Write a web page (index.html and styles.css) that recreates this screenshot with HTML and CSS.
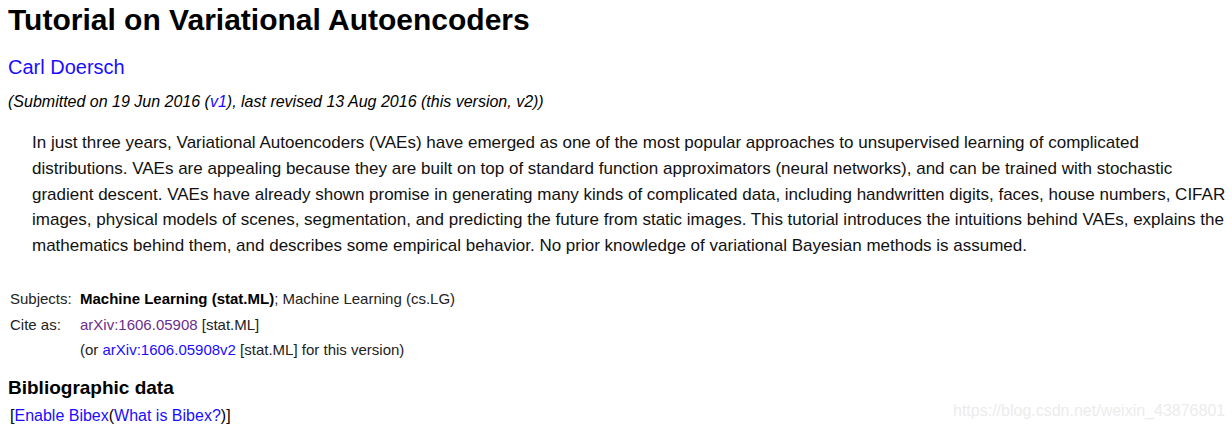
FILE: index.html
```html
<!DOCTYPE html>
<html lang="en">
<head>
    <meta charset="UTF-8">
    <title>Tutorial on Variational Autoencoders</title>
    <link rel="stylesheet" href="styles.css">
</head>
<body>
    <div class="leftcolumn">
        <h1 class="title">Tutorial on Variational Autoencoders</h1>
        <div class="authors"><a href="#">Carl Doersch</a></div>
        <div class="dateline">(Submitted on 19 Jun 2016 (<a href="#">v1</a>), last revised 13 Aug 2016 (this version, v2))</div>
        <blockquote class="abstract">In just three years, Variational Autoencoders (VAEs) have emerged as one of the most popular approaches to unsupervised learning of complicated distributions. VAEs are appealing because they are built on top of standard function approximators (neural networks), and can be trained with stochastic gradient descent. VAEs have already shown promise in generating many kinds of complicated data, including handwritten digits, faces, house numbers, CIFAR images, physical models of scenes, segmentation, and predicting the future from static images. This tutorial introduces the intuitions behind VAEs, explains the mathematics behind them, and describes some empirical behavior. No prior knowledge of variational Bayesian methods is assumed.</blockquote>

        <table class="metatable">
            <tr>
                <td class="label">Subjects:</td>
                <td><span class="primary-subject">Machine Learning (stat.ML)</span>; Machine Learning (cs.LG)</td>
            </tr>
            <tr>
                <td class="label">Cite as:</td>
                <td><a href="#" class="visited">arXiv:1606.05908</a> [stat.ML]</td>
            </tr>
            <tr>
                <td class="label"></td>
                <td>(or <a href="#">arXiv:1606.05908v2</a> [stat.ML] for this version)</td>
            </tr>
        </table>

        <h2 class="bib-title">Bibliographic data</h2>
        <div class="bibex">[<a href="#">Enable Bibex</a>(<a href="#">What is Bibex?</a>)]</div>
    </div>
    <div class="watermark">https://blog.csdn.net/weixin_43876801</div>
</body>
</html>
```

FILE: styles.css
```css
body {
    margin: 0;
    padding: 0 4px 0 8px;
    font-family: "Liberation Sans", Arial, sans-serif;
    color: #000;
    background: #fff;
    position: relative;
    height: 430px;
    overflow: hidden;
}

a {
    color: #1a0dff;
    text-decoration: none;
}

a.visited {
    color: #6b2d8b;
}

.title {
    font-size: 30px;
    font-weight: bold;
    margin: 2px 0 0 0;
    line-height: 36px;
}

.authors {
    font-size: 20px;
    margin-top: 17px;
    line-height: 24px;
}

.dateline {
    font-size: 16px;
    font-style: italic;
    margin-top: 13px;
    line-height: 20px;
}

.abstract {
    font-size: 17px;
    line-height: 25.8px;
    margin: 18px 0 0 24px;
    color: #111;
}

.metatable {
    border-collapse: collapse;
    margin-top: 27px;
    font-size: 15px;
    color: #222;
}

.metatable td {
    padding: 0 2px;
    height: 25.5px;
    vertical-align: middle;
}

.metatable td.label {
    width: 66px;
}

.primary-subject {
    font-weight: bold;
    color: #000;
}

.bib-title {
    font-size: 19px;
    font-weight: bold;
    margin: 14px 0 0 0;
    line-height: 24px;
}

.bibex {
    font-size: 16px;
    margin: 6px 0 0 2px;
    line-height: 20px;
}

.watermark {
    position: absolute;
    left: 953px;
    top: 402px;
    font-size: 16px;
    color: #ececec;
}
```
